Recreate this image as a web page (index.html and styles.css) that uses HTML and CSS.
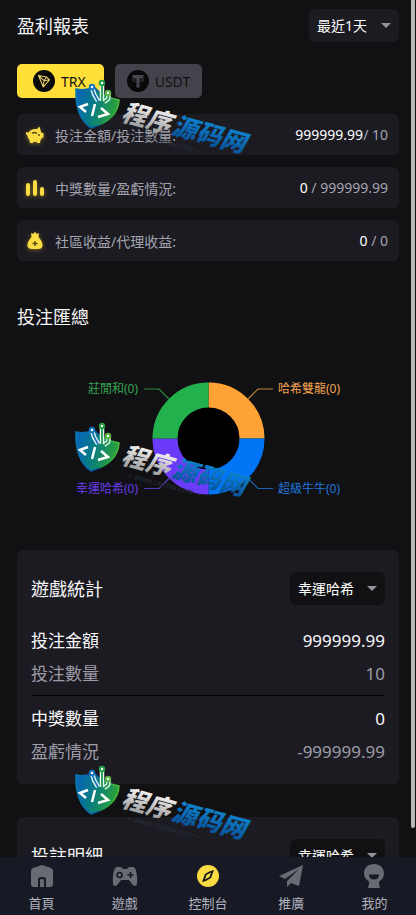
FILE: index.html
```html
<!DOCTYPE html>
<html lang="zh-Hant">
<head>
<meta charset="utf-8">
<meta name="viewport" content="width=device-width, initial-scale=1">
<title>盈利報表</title>
<link rel="stylesheet" href="styles.css">
</head>
<body>
<div class="app">
  <main class="content">
    <header class="head">
      <h1 class="title">盈利報表</h1>
      <label class="picker"><select aria-label="日期範圍"><option>最近1天</option></select></label>
    </header>

    <div class="coins">
      <button class="coin coin-active" type="button">
        <svg class="coin-icon" viewBox="0 0 22 22"><circle cx="11" cy="11" r="11" fill="#090909"/><path d="M5.500 5.500L13.500 7L16.500 9.800L10.300 17Z M5.500 5.500L11 10.700L16.500 9.800 M11 10.700L13.500 7 M11 10.700L10.300 17" fill="none" stroke="#e8cf6a" stroke-width="1.100" stroke-linejoin="round"/></svg>
        TRX
      </button>
      <button class="coin" type="button">
        <svg class="coin-icon" viewBox="0 0 22 22"><circle cx="11" cy="11" r="11" fill="#090909"/><path d="M5.500 5H16.500V8H12.500V17.500H9.500V8H5.500Z" fill="#45464d"/><ellipse cx="11" cy="10" rx="6" ry="1.500" fill="none" stroke="#45464d" stroke-width=".9"/></svg>
        USDT
      </button>
    </div>

    <section class="stats">
      <div class="stat">
        <svg class="stat-icon" viewBox="0 0 20 20"><ellipse cx="10" cy="10.500" rx="7.500" ry="6.500"/><path d="M11 5L14.500 1.500L16 7Z M1 7L4 8L3 11L1 9Z M16 8H18.500V12.500H16Z M4.500 14H8V18H5Z M12 14H15.500L15 18H12Z"/><path class="cut" d="M7 8.500Q9.500 6.500 12 8.500"/><circle cx="14" cy="10" r="1" fill="#5b4c16"/></svg>
        <span class="stat-name">投注金額/投注數量:</span>
        <span class="stat-value"><b>999999.99</b>/ 10</span>
      </div>
      <div class="stat">
        <svg class="stat-icon" viewBox="0 0 20 20"><rect x="1" y="5" width="4" height="13" rx="2"/><rect x="8" y="2" width="4" height="16" rx="2"/><rect x="15" y="9" width="4" height="9" rx="2"/></svg>
        <span class="stat-name">中獎數量/盈虧情況:</span>
        <span class="stat-value"><b>0</b> / 999999.99</span>
      </div>
      <div class="stat">
        <svg class="stat-icon" viewBox="0 0 20 20"><path d="M6 2L8 3L10 1L12 3L14 2L13.500 6H6.500Z M6.500 6H13.500Q18 11 17.500 15Q17 18 13 18H7Q3 18 2.500 15Q2 11 6.500 6Z"/><path class="cut" d="M10 10V15M7.500 12.500H12.500"/></svg>
        <span class="stat-name">社區收益/代理收益:</span>
        <span class="stat-value"><b>0</b> / 0</span>
      </div>
    </section>

    <h2 class="title summary-title">投注匯總</h2>
    <svg class="chart" viewBox="0 0 382 221" role="img" aria-label="投注匯總">
      <circle cx="191.500" cy="109.500" r="32" fill="#000"/>
      <g fill="none" stroke-width="25">
        <path d="M191.500 66A43.500 43.500 0 0 1 235 109.500" stroke="#ffa235"/>
        <path d="M235 109.500A43.500 43.500 0 0 1 191.500 153" stroke="#0076f6"/>
        <path d="M191.500 153A43.500 43.500 0 0 1 148 109.500" stroke="#6b3bfa"/>
        <path d="M148 109.500A43.500 43.500 0 0 1 191.500 66" stroke="#22b14c"/>
      </g>
      <g fill="none" stroke-width="1.200">
        <path d="M127 60H142L152 70" stroke="#2a8a43"/>
        <path d="M256 60H241L231 70" stroke="#c08339"/>
        <path d="M127 159.500H142L152 149.500" stroke="#5638b8"/>
        <path d="M256 159.500H241L231 149.500" stroke="#1a63b4"/>
      </g>
      <g class="chart-label">
        <text x="121" y="64" text-anchor="end" fill="#35a453">莊閒和(0)</text>
        <text x="261" y="64" fill="#f5a552">哈希雙龍(0)</text>
        <text x="121" y="164" text-anchor="end" fill="#683ce8">幸運哈希(0)</text>
        <text x="261" y="164" fill="#1d76dc">超級牛牛(0)</text>
      </g>
    </svg>

    <section class="card">
      <div class="head">
        <h2 class="title">遊戲統計</h2>
        <label class="picker picker-dark"><select aria-label="統計遊戲"><option>幸運哈希</option></select></label>
      </div>
      <dl class="figures">
        <div class="figure strong"><dt>投注金額</dt><dd>999999.99</dd></div>
        <div class="figure"><dt>投注數量</dt><dd>10</dd></div>
      </dl>
      <dl class="figures">
        <div class="figure strong"><dt>中獎數量</dt><dd>0</dd></div>
        <div class="figure"><dt>盈虧情況</dt><dd>-999999.99</dd></div>
      </dl>
    </section>

    <section class="card">
      <div class="head">
        <h2 class="title">投註明細</h2>
        <label class="picker picker-dark"><select aria-label="明細遊戲"><option>幸運哈希</option></select></label>
      </div>
    </section>
  </main>

  <nav class="tabs">
    <a class="tab" href="#home"><svg viewBox="0 0 26 24"><path fill-rule="evenodd" d="M13 1L22 4Q24 5 24 7V20Q24 23 21 23H5Q2 23 2 20V7Q2 5 4 4Z M9 23H11V16Q11 15 13 15Q15 15 15 16V23H17V15Q17 13 13 13Q9 13 9 15Z"/></svg>首頁</a>
    <a class="tab" href="#games"><svg viewBox="0 0 26 24"><path d="M5 3H9L11 5H15L17 3H21Q24 3 25 12Q26 22 23 22Q21 22 17 16H9Q5 22 3 22Q0 22 1 12Q2 3 5 3Z"/><g fill="none" stroke="#171a24" stroke-width="1.700"><circle cx="7.500" cy="11" r="2.500"/><path d="M18.500 8V14M15.500 11H21.500"/></g></svg>遊戲</a>
    <a class="tab" href="#console" aria-current="page"><svg viewBox="0 0 26 24"><circle cx="13" cy="12" r="11" fill="#f9dc41"/><path fill="#16171c" fill-rule="evenodd" d="M19 6L16 14Q12 17 7 18L10 10Q14 7 19 6Z M16 8.500L11.500 11L10 15.500L14.500 13Z"/></svg>控制台</a>
    <a class="tab" href="#promote"><svg viewBox="0 0 26 24"><path d="M25 1L1 12L7 15L21 5L9 17V23L13 19L21 22Z"/></svg>推廣</a>
    <a class="tab" href="#me"><svg viewBox="0 0 26 24"><path fill-rule="evenodd" d="M13 0C19 0 23 4 23 9.500C23 13 21 16 18 17.500V20L19 24H7L8 20V17.500C5 16 3 13 3 9.500C3 4 7 0 13 0Z M8 10.500Q8 15.500 13 15.500Q18 15.500 18 10.500Z"/></svg>我的</a>
  </nav>
</div>

<div class="scroll-thumb"></div>

<svg class="defs" width="0" height="0" aria-hidden="true">
  <defs>
    <linearGradient id="shield" x1="0" y1="0" x2="1" y2=".3"><stop offset=".1" stop-color="#0866b5"/><stop offset=".5" stop-color="#087c83"/><stop offset="1" stop-color="#2aa13b"/></linearGradient>
    <linearGradient id="rim" x1="0" y1="0" x2="1" y2="0"><stop offset="0" stop-color="#077bb0"/><stop offset=".5" stop-color="#0755a8"/><stop offset=".6" stop-color="#159a4c"/><stop offset="1" stop-color="#4fb83b"/></linearGradient>
    <linearGradient id="silver" x1="0" y1="0" x2="0" y2="1"><stop offset=".2" stop-color="#f5f5f5"/><stop offset="1" stop-color="#8c8c8c"/></linearGradient>
    <linearGradient id="blue" x1="0" y1="0" x2="0" y2="1"><stop offset=".2" stop-color="#0f83cf"/><stop offset="1" stop-color="#08498f"/></linearGradient>
    <symbol id="brand" viewBox="0 0 190 90">
      <path d="M6 15Q16 17 24 13Q32 23 49 26Q48 46 21 54Q5 43 6 15Z" fill="url(#shield)" stroke="url(#rim)" stroke-width="1.500"/>
      <g fill="none" stroke="#e8f7f5" stroke-width="4.500"><path d="M22 13L24 20L28 27M32 8V27M39 19L38 25L34 28"/></g>
      <g fill="none" stroke-width="1.800"><path d="M22 13L24 20L28 27" stroke="#1673b8"/><path d="M32 8V27M39 19L38 25L34 28" stroke="#249b4b"/></g>
      <g fill="#fff" stroke-width="2"><circle cx="22" cy="13" r="2.200" stroke="#1673b8"/><circle cx="32" cy="9" r="2.200" stroke="#239f43"/><circle cx="38" cy="19" r="2.200" stroke="#55b646"/></g>
      <path d="M18 30L10 33L16 38M25 30L22 42M31 34L38 40L28 43" fill="none" stroke="#fff" stroke-width="2.500"/>
      <g transform="rotate(15 50 47)">
        <text class="brand-name" x="50" y="46" fill="url(#silver)">程序</text>
        <text class="brand-name" x="102" y="46" fill="url(#blue)">源码网</text>
        <text class="brand-url" x="58" y="58">— www.cxymw.com —</text>
      </g>
    </symbol>
  </defs>
</svg>
<div class="brands" aria-hidden="true">
  <svg class="brand"><use href="#brand"/></svg>
  <svg class="brand"><use href="#brand"/></svg>
  <svg class="brand"><use href="#brand"/></svg>
</div>
</body>
</html>
```
FILE: styles.css
```css
* { box-sizing: border-box; }

body {
  margin: 0;
  background: #111113;
  color: #f5f5f7;
  font-family: "Noto Sans", "Noto Sans CJK TC", sans-serif;
  font-size: 14px;
}

.app {
  display: flex;
  flex-direction: column;
  height: 100vh;
}

.content {
  flex: 1;
  min-height: 0;
  overflow-y: auto;
  scrollbar-width: none;
  padding: 9px 17px;
}

.head {
  display: flex;
  align-items: center;
  justify-content: space-between;
}

.title {
  margin: 0;
  font-size: 18px;
  font-weight: 400;
  line-height: 24px;
}

.picker {
  position: relative;
  display: flex;
}

.picker select {
  appearance: none;
  height: 33px;
  padding: 0 31px 0 8px;
  border: 0;
  border-radius: 6px;
  background: #1c1b22;
  color: #fff;
  font: inherit;
}

.picker-dark select { background: #111113; }

.picker::after {
  content: "";
  position: absolute;
  top: 14px;
  right: 8px;
  border: 5px solid transparent;
  border-top-color: #929297;
  border-bottom: 0;
  pointer-events: none;
}

.coins {
  display: flex;
  gap: 11px;
  margin-top: 22px;
}

.coin {
  display: flex;
  align-items: center;
  gap: 6px;
  height: 34px;
  padding: 0 12px;
  border: 0;
  border-radius: 5px;
  background: #43444b;
  color: #111;
  font: inherit;
}

.coin-active {
  padding: 0 18px 0 16px;
  background: #ffdf38;
}

.coin-icon { width: 22px; height: 22px; }

.stats {
  display: flex;
  flex-direction: column;
  gap: 12px;
  margin-top: 16px;
}

.stat {
  display: flex;
  align-items: center;
  height: 41px;
  padding: 0 11px 0 8px;
  border-radius: 6px;
  background: #1c1b22;
  color: #a3a3ae;
}

.stat-icon {
  width: 20px;
  height: 20px;
  margin-right: 10px;
  fill: #fbdc45;
  filter: drop-shadow(0 1px 2px #a98e18aa);
}

.cut {
  fill: none;
  stroke: #5b4c16;
  stroke-width: 1.5;
}

.stat-value {
  margin-left: auto;
  white-space: pre;
}

.stat-value b {
  color: #fff;
  font-weight: 400;
}

.summary-title { margin-top: 44px; }

.chart {
  display: block;
  width: 100%;
  height: 221px;
}

.chart-label { font-size: 12px; }

.card {
  margin-bottom: 33px;
  padding: 22px 14px 16px;
  border-radius: 6px;
  background: #1c1b22;
}

.figures {
  margin: 0;
  padding-top: 6px;
  font-size: 17px;
  line-height: 33px;
}

.head + .figures {
  margin-top: 13px;
  padding-bottom: 5px;
  border-bottom: 1px solid #020204;
}

.figure {
  display: flex;
  justify-content: space-between;
  color: #9c9ca8;
}

.figure dd { margin: 0; }

.strong { color: #f8f8fa; }

.tabs {
  display: grid;
  grid-template-columns: repeat(5, 1fr);
  background: #171a24;
}

.tab {
  display: flex;
  flex-direction: column;
  align-items: center;
  gap: 5px;
  padding: 7px 0 2px;
  color: #b1b3bf;
  font-size: 13px;
  line-height: 20px;
  text-decoration: none;
}

.tab svg {
  width: 26px;
  height: 24px;
  fill: #686b73;
}

.scroll-thumb {
  position: fixed;
  top: 0;
  right: 1px;
  bottom: 87px;
  width: 4px;
  border-radius: 0 0 2px 2px;
  background: #b9b9bb;
}

.defs { position: absolute; }

.brands {
  position: absolute;
  top: 74px;
  left: 70px;
  display: grid;
  gap: 253px;
  pointer-events: none;
}

.brand {
  display: block;
  width: 190px;
  height: 90px;
}

.brand-name {
  font-family: "Noto Sans CJK SC", sans-serif;
  font-size: 25px;
  font-style: italic;
  font-weight: 900;
}

.brand-url {
  fill: #26303a;
  font-size: 8px;
  font-style: italic;
}
```
